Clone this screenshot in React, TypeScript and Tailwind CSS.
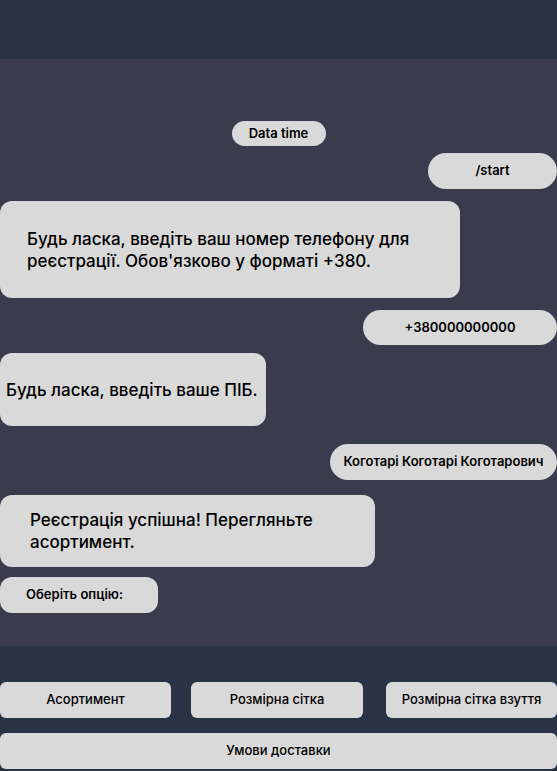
export default function App() {
  const pill =
    "bg-[#d9d9d9] rounded-full text-[13px] font-semibold text-black flex items-center justify-center";
  const bubble =
    "bg-[#d9d9d9] rounded-[12px] text-[17px] font-medium text-black leading-[22px] flex items-center";
  const btn =
    "bg-[#d9d9d9] rounded-[6px] text-[13px] font-medium text-black flex items-center justify-center";

  return (
    <div
      className="w-[557px] h-[771px] flex flex-col bg-[#283346] overflow-hidden"
      style={{ fontFamily: "Inter, 'Noto Sans', sans-serif" }}
    >
      <header className="h-[59px] shrink-0 bg-[#283346]" />

      <main className="h-[587px] shrink-0 bg-[#3a3c4e] flex flex-col">
        <div className={`${pill} self-center mt-[62px] w-[94px] h-[25px]`}>
          Data time
        </div>
        <div className={`${pill} self-end mt-[7px] w-[129px] h-[36px]`}>
          /start
        </div>
        <div className={`${bubble} mt-[12px] w-[460px] h-[97px] pl-[27px]`}>
          <p>
            Будь ласка, введіть ваш номер телефону для
            <br />
            реєстрації. Обов'язково у форматі +380.
          </p>
        </div>
        <div className={`${pill} self-end mt-[12px] w-[194px] h-[35px]`}>
          +380000000000
        </div>
        <div className={`${bubble} mt-[8px] w-[266px] h-[73px] pl-[6px]`}>
          <p>Будь ласка, введіть ваше ПІБ.</p>
        </div>
        <div className={`${pill} self-end mt-[18px] w-[227px] h-[36px]`}>
          Коготарі Коготарі Коготарович
        </div>
        <div className={`${bubble} mt-[15px] w-[375px] h-[72px] pl-[30px]`}>
          <p>
            Реєстрація успішна! Перегляньте
            <br />
            асортимент.
          </p>
        </div>
        <div className="mt-[10px] w-[158px] h-[36px] bg-[#d9d9d9] rounded-[12px] text-[13px] font-semibold text-black flex items-center pl-[26px]">
          Оберіть опцію:
        </div>
      </main>

      <footer className="flex-1 bg-[#283346] flex flex-col gap-[15px] pt-[36px]">
        <div className="flex">
          <button className={`${btn} w-[171px] h-[36px]`}>Асортимент</button>
          <button className={`${btn} ml-[20px] w-[172px] h-[36px]`}>
            Розмірна сітка
          </button>
          <button className={`${btn} ml-[23px] w-[171px] h-[36px]`}>
            Розмірна сітка взуття
          </button>
        </div>
        <button className={`${btn} w-full h-[36px]`}>Умови доставки</button>
      </footer>
    </div>
  );
}
